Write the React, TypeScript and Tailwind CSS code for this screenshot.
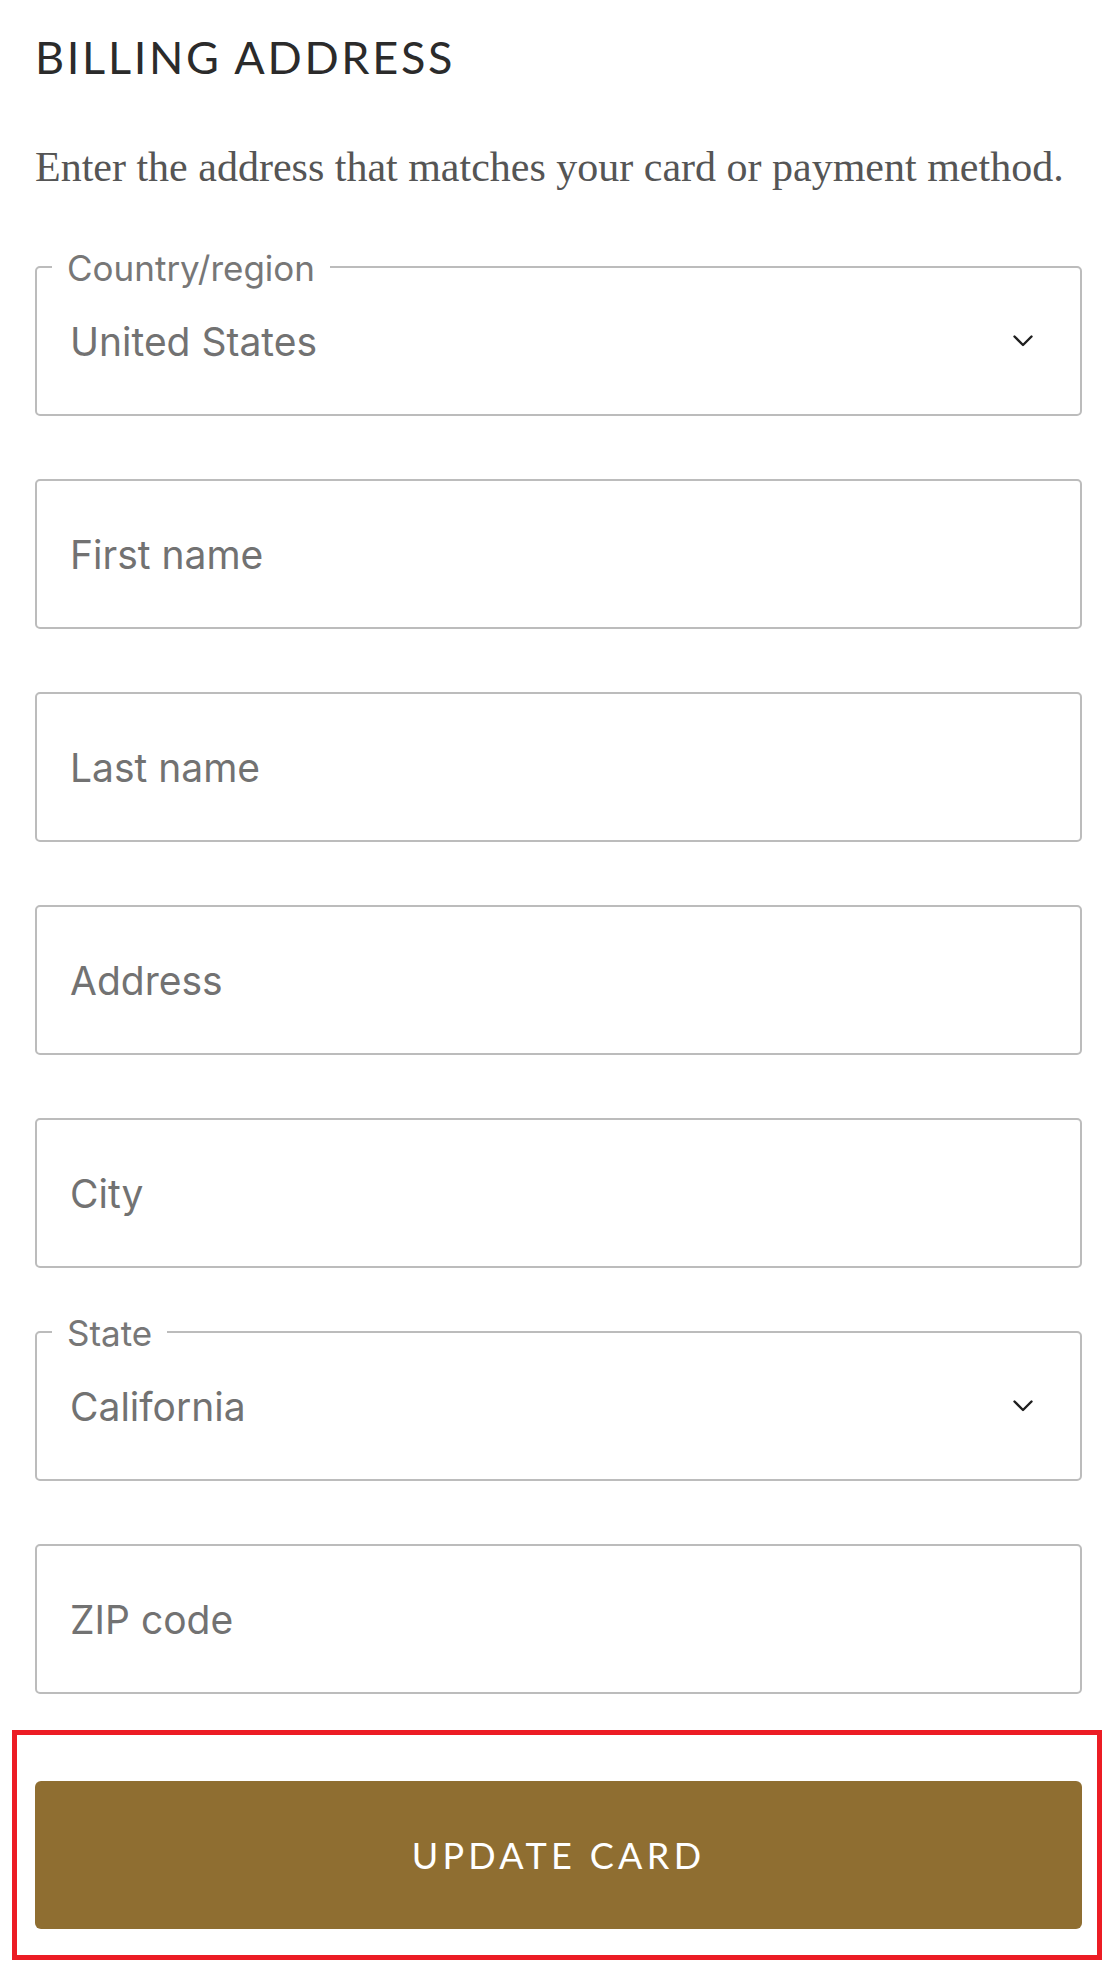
import React from 'react'

type Field = {
  label?: string
  value: string
  select?: boolean
}

const FIELDS: Field[] = [
  { label: 'Country/region', value: 'United States', select: true },
  { value: 'First name' },
  { value: 'Last name' },
  { value: 'Address' },
  { value: 'City' },
  { label: 'State', value: 'California', select: true },
  { value: 'ZIP code' },
]

function Chevron() {
  return (
    <svg width="20" height="12" viewBox="0 0 20 12" fill="none" className="shrink-0">
      <polyline points="1.5,1.5 10,10 18.5,1.5" stroke="#1f1f1f" strokeWidth="2.4" strokeLinecap="round" strokeLinejoin="round" />
    </svg>
  )
}

function InputBox({ field }: { field: Field }) {
  return (
    <div className="relative flex h-[150px] items-center rounded-[5px] border-2 border-[#bcbcbc] pl-[33px] pr-[47px]">
      {field.label && (
        <span className="absolute left-[15px] top-0 -translate-y-1/2 bg-white px-[15px] text-[35px] leading-none text-[#777]">
          {field.label}
        </span>
      )}
      <span className="flex-1 text-[39px] leading-none text-[#727272]">{field.value}</span>
      {field.select && <Chevron />}
    </div>
  )
}

export default function App() {
  return (
    <div className="w-[1117px] bg-white pb-[23px]" style={{ fontFamily: 'Inter, "Noto Sans", sans-serif' }}>
      <div className="px-[35px] pt-[30px]">
        <h1
          className="text-[45px] leading-[54px] tracking-[0.06em] text-[#2b2b2b]"
          style={{ fontFamily: 'Lato, "Open Sans", sans-serif' }}
        >
          BILLING ADDRESS
        </h1>

        <p
          className="mt-[58px] text-[42px] leading-[50px] text-[#555]"
          style={{ fontFamily: '"Liberation Serif", "DejaVu Serif", serif' }}
        >
          Enter the address that matches your card or payment method.
        </p>

        <div className="mt-[74px] flex flex-col gap-[63px]">
          {FIELDS.map((f) => (
            <InputBox key={f.value} field={f} />
          ))}
        </div>
      </div>

      {/* highlighted action */}
      <div className="mt-[36px] ml-[12px] mr-[15px] border-[5px] border-[#ec1c24] pl-[18px] pr-[15px] pt-[46px] pb-[26px]">
        <button
          className="flex h-[148px] w-full items-center justify-center rounded-[6px] bg-[#8f6e31] text-[36px] tracking-[0.12em] text-white"
          style={{ fontFamily: 'Lato, "Open Sans", sans-serif' }}
        >
          UPDATE CARD
        </button>
      </div>
    </div>
  )
}
